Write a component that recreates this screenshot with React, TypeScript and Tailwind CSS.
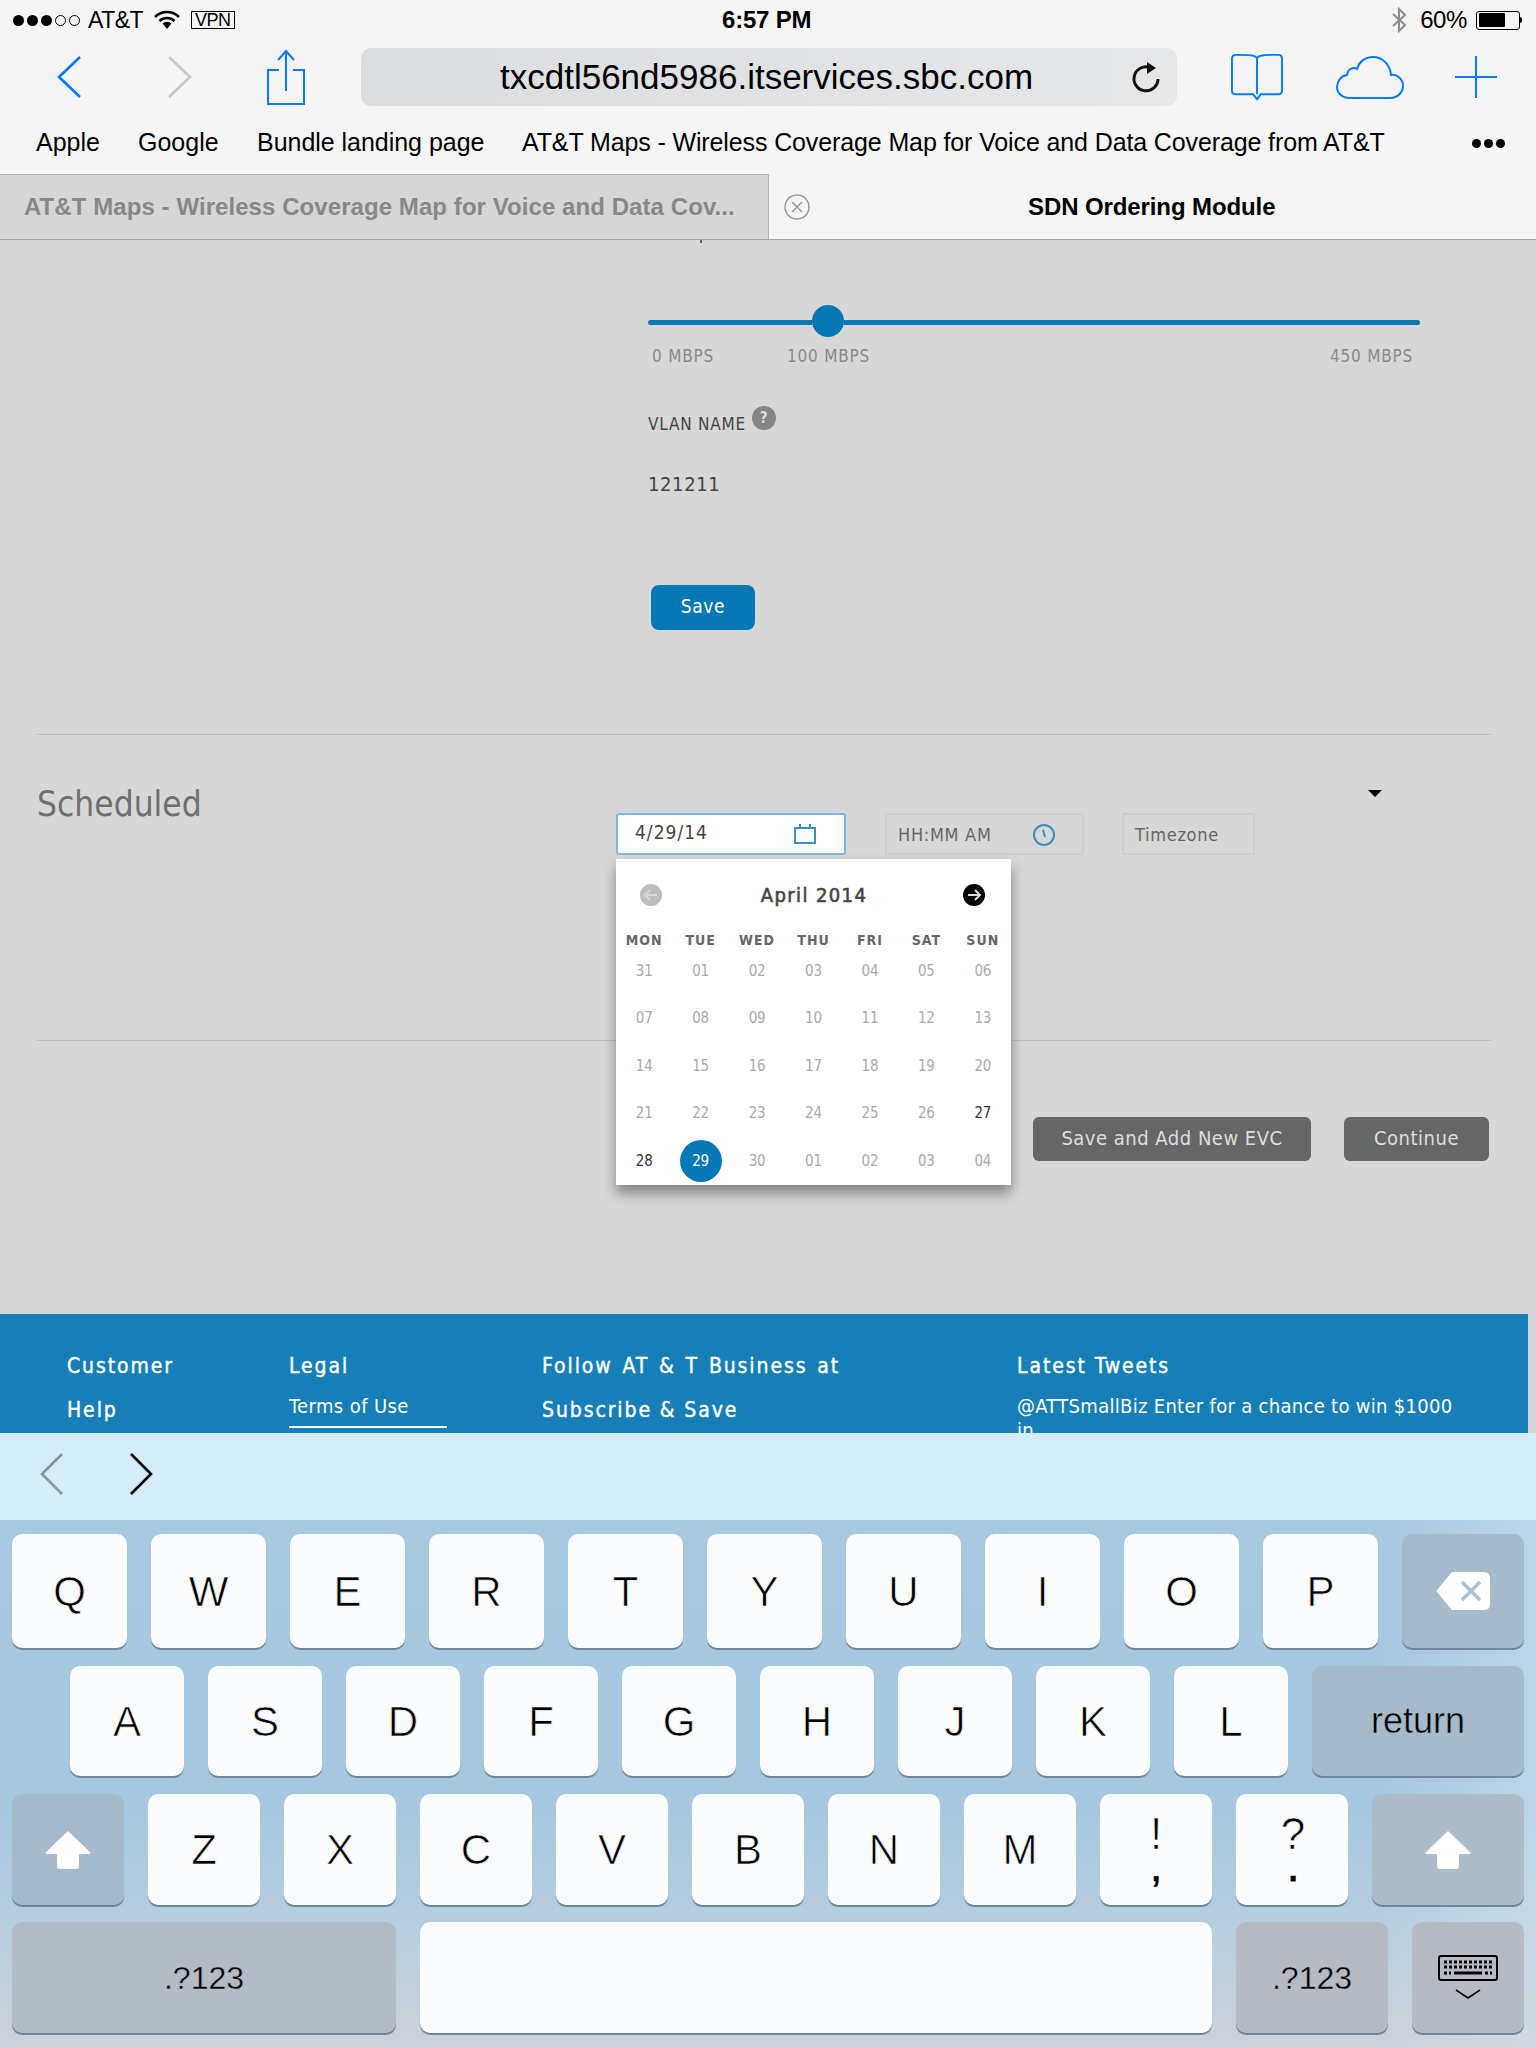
const sans = "font-['Liberation_Sans',Arial,sans-serif]";
const web = "font-['DejaVu_Sans_Condensed','DejaVu_Sans',sans-serif]";

const days = [
  "31", "01", "02", "03", "04", "05", "06",
  "07", "08", "09", "10", "11", "12", "13",
  "14", "15", "16", "17", "18", "19", "20",
  "21", "22", "23", "24", "25", "26", "27",
  "28", "29", "30", "01", "02", "03", "04",
];
const weekdays = ["MON", "TUE", "WED", "THU", "FRI", "SAT", "SUN"];

const rowOne = ["Q", "W", "E", "R", "T", "Y", "U", "I", "O", "P"];
const rowTwo = ["A", "S", "D", "F", "G", "H", "J", "K", "L"];
const rowThree = ["Z", "X", "C", "V", "B", "N", "M"];

const lightKey = `flex items-center justify-center rounded-[10px] bg-[#fbfcfe] text-[42px] leading-none text-black shadow-[0_2px_0_#71879a] [-webkit-text-stroke:0.7px_#fbfcfe] ${sans}`;
const darkKey = `flex items-center justify-center rounded-[10px] text-black shadow-[0_2px_0_#71879a] ${sans}`;

const StatusBar = () => (
  <div className={`flex h-10 items-center pl-[13px] pr-[14px] text-[23px] text-black ${sans}`}>
    <div className="flex w-[500px] items-center">
      <div className="flex gap-[3px]">
        {[0, 1, 2].map((i) => (
          <span key={i} className="h-[11px] w-[11px] rounded-full bg-black" />
        ))}
        {[0, 1].map((i) => (
          <span key={i} className="h-[11px] w-[11px] rounded-full border border-black" />
        ))}
      </div>
      <span className="ml-[8px] tracking-[-0.5px]">AT&amp;T</span>
      <svg className="ml-[11px]" width="26" height="20" viewBox="0 0 26 20">
        <path d="M1 7 A17 17 0 0 1 25 7" fill="none" stroke="#000" strokeWidth="2.6" />
        <path d="M5.5 11 A11 11 0 0 1 20.5 11" fill="none" stroke="#000" strokeWidth="2.6" />
        <path d="M13 19 L8.5 13.5 A7 7 0 0 1 17.5 13.5 Z" fill="#000" />
      </svg>
      <span className="ml-[11px] border border-black px-[3px] text-[18px] leading-[16px] tracking-[-0.5px]">VPN</span>
    </div>
    <div className="flex-1 pl-[209px] font-bold tracking-[-0.2px] [font-size:24px]">6:57 PM</div>
    <svg width="14" height="26" viewBox="0 0 14 26" fill="none" stroke="#8c8c8c" strokeWidth="2">
      <path d="M1 7 L13 18 L7 24 V2 L13 8 L1 19" />
    </svg>
    <span className="ml-[14px] text-[24px] tracking-[-0.4px]">60%</span>
    <div className="ml-[9px] flex h-[19px] w-[44px] items-center rounded-[3px] border border-black p-[1.5px]">
      <div className="h-full w-[26px] rounded-[1px] bg-black" />
    </div>
    <span className="h-[6px] w-[2px] rounded-r bg-black" />
  </div>
);

const Toolbar = () => (
  <div className="flex h-[76px] items-center pb-[2px]">
    <svg className="ml-[57px]" width="24" height="42" viewBox="0 0 24 42" fill="none" stroke="#007aff" strokeWidth="2.6">
      <path d="M23 1 L2 21 L23 41" />
    </svg>
    <svg className="ml-[87px]" width="24" height="42" viewBox="0 0 24 42" fill="none" stroke="#c8c8c8" strokeWidth="2.6">
      <path d="M1 1 L22 21 L1 41" />
    </svg>
    <svg className="ml-[75px]" width="38" height="56" viewBox="0 0 38 56" fill="none" stroke="#007aff" strokeWidth="2">
      <path d="M12 21 H1 V55 H37 V21 H26" />
      <path d="M19 42 V3 M11 11 L19 2 L27 11" />
    </svg>
    <div className={`ml-[56px] flex h-[58px] w-[816px] items-center rounded-[10px] bg-[linear-gradient(90deg,#dcdde0,#e6e7e9)] pl-[139px] text-[35px] text-black ${sans}`}>
      <span className="w-[538px] whitespace-nowrap">txcdtl56nd5986.itservices.sbc.com</span>
      <svg className="ml-[93px]" width="30" height="32" viewBox="0 0 30 32" fill="none" stroke="#111" strokeWidth="3">
        <path d="M19 6.5 A12 12 0 1 0 27 18" />
        <path d="M16 1 L25 7 L16 13 Z" fill="#111" stroke="none" />
      </svg>
    </div>
    <svg className="ml-[54px]" width="52" height="48" viewBox="0 0 54 48" fill="none" stroke="#007aff" strokeWidth="2">
      <path d="M27 4 C24 1 20 1 5 1 Q1 1 1 5 V38 Q1 42 5 42 H23 L27 47 L31 42 H49 Q53 42 53 38 V5 Q53 1 49 1 C34 1 30 1 27 4 V42" />
    </svg>
    <svg className="ml-[53px]" width="68" height="44" viewBox="0 0 68 44" fill="none" stroke="#007aff" strokeWidth="2">
      <path d="M14 43 H54 C62 43 67 37 67 31 C67 24 61 19 55 20 C54 9 46 2 37 2 C29 2 23 7 21 14 C18 12 12 13 11 20 C5 21 1 26 1 32 C1 38 6 43 14 43 Z" />
    </svg>
    <svg className="ml-[51px]" width="42" height="42" viewBox="0 0 42 42" stroke="#007aff" strokeWidth="2">
      <path d="M21 0 V42 M0 21 H42" />
    </svg>
  </div>
);

const Bookmarks = () => (
  <div className={`flex h-[58px] items-center pb-[4px] pl-[36px] text-[25px] text-black ${sans}`}>
    <span className="w-[102px]">Apple</span>
    <span className="w-[119px]">Google</span>
    <span className="w-[265px] tracking-[-0.03px]">Bundle landing page</span>
    <span className="w-[950px] whitespace-nowrap tracking-[-0.12px]">AT&amp;T Maps - Wireless Coverage Map for Voice and Data Coverage from AT&amp;T</span>
    <div className="flex gap-[3px]">
      {[0, 1, 2].map((i) => (
        <span key={i} className="h-[9px] w-[9px] rounded-full bg-black" />
      ))}
    </div>
  </div>
);

const Tabs = () => (
  <div className={`flex h-[66px] border-b border-[#a8a8a8] text-[24px] ${sans}`}>
    <div className="flex w-[769px] items-center whitespace-nowrap border-r border-t border-[#b3b3b3] bg-[#d6d6d6] pl-[24px] font-bold tracking-[0.07px] text-[#888]">
      AT&amp;T Maps - Wireless Coverage Map for Voice and Data Cov...
    </div>
    <div className="flex flex-1 items-center pl-[15px]">
      <svg width="26" height="26" viewBox="0 0 26 26" fill="none" stroke="#999" strokeWidth="1.5">
        <circle cx="13" cy="13" r="12" />
        <path d="M8 8 L18 18 M18 8 L8 18" />
      </svg>
      <span className="ml-[218px] font-bold tracking-[-0.1px] text-black">SDN Ordering Module</span>
    </div>
  </div>
);

const Calendar = () => (
  <div className={`absolute -left-[2px] top-[44px] z-10 h-[326px] w-[395px] bg-white shadow-[0_8px_12px_rgba(0,0,0,0.4)] ${web}`}>
    <div className="flex items-center pl-[24px] pt-[21px]">
      <svg width="22" height="22" viewBox="0 0 22 22">
        <circle cx="11" cy="11" r="11" fill="#bdbdbd" />
        <path d="M17 11 H5 M10 6 L5 11 L10 16" fill="none" stroke="#d8d8d8" strokeWidth="2" />
      </svg>
      <span className="w-[301px] pl-[3px] text-center text-[20px] tracking-[1.4px] text-[#444] [-webkit-text-stroke:0.6px_#444]">April 2014</span>
      <svg width="22" height="22" viewBox="0 0 22 22">
        <circle cx="11" cy="11" r="11" fill="#000" />
        <path d="M5 11 H17 M12 6 L17 11 L12 16" fill="none" stroke="#ddd" strokeWidth="2" />
      </svg>
    </div>
    <div className="mt-[20px] grid grid-cols-7 text-center text-[14px] font-bold leading-[20px] text-[#666]">
      {weekdays.map((d) => (
        <span key={d}>{d}</span>
      ))}
    </div>
    <div className="-mt-[3px] grid grid-cols-7 text-center text-[15px] tracking-[-0.2px]">
      {days.map((d, i) => {
        const dark = i === 27 || i === 28;
        const picked = i === 29;
        return (
          <div key={i} className="flex h-[47.5px] items-center justify-center">
            {picked ? (
              <span className="flex h-[42px] w-[42px] items-center justify-center rounded-full bg-[#0678b6] text-white">{d}</span>
            ) : (
              <span className={dark ? "text-[#333]" : "text-[#aaa]"}>{d}</span>
            )}
          </div>
        );
      })}
    </div>
  </div>
);

const Form = () => (
  <main className={`relative flex h-[1074px] flex-col bg-[#d7d7d7] ${web}`}>
    <span className="absolute left-[700px] top-0 h-[3px] w-[2px] bg-[#666]" />
    <section className="h-[494px] pl-[648px]">
      <div className="mt-[65px] flex h-[32px] w-[772px] items-center pt-[3px]">
        <div className="h-[5px] w-[164px] rounded-l bg-[#0678b6]" />
        <div className="-mt-[3px] h-[32px] w-[32px] rounded-full bg-[#0678b6]" />
        <div className="h-[5px] flex-1 rounded-r bg-[#0678b6]" />
      </div>
      <div className="mt-[8px] flex w-[765px] pl-[4px] text-[17px] leading-[22px] tracking-[0.8px] text-[#8a8a8a]">
        <span className="w-[135px]">0 MBPS</span>
        <span>100 MBPS</span>
        <span className="ml-auto">450 MBPS</span>
      </div>
      <div className="mt-[45px] flex items-start text-[17px] leading-[24px] tracking-[0.8px] text-[#444]">
        <span>VLAN NAME</span>
        <span className="ml-[6px] -mt-[6px] flex h-[24px] w-[24px] items-center justify-center rounded-full bg-[#858585] text-[15px] font-bold text-[#ddd]">?</span>
      </div>
      <div className="mt-[36px] text-[20px] leading-[24px] tracking-[0.6px] text-[#444]">121211</div>
      <button className="ml-[3px] mt-[89px] flex h-[45px] w-[104px] items-center justify-center rounded-[8px] bg-[#0678b6] pb-[2px] text-[19px] tracking-[0.6px] text-white">
        Save
      </button>
    </section>
    <div className="ml-[37px] mr-[45px] border-t border-[#bdbdbd]" />
    <section className="flex h-[305px] pl-[37px]">
      <h2 className="w-[579px] pt-[49px] text-[35px] leading-[40px] text-[#6f6f6f]">Scheduled</h2>
      <div className="flex flex-col">
        <div className="-mr-[127px] mt-[55px] flex h-[7px] justify-end">
          <span className="h-0 w-0 border-x-[7px] border-t-[7px] border-x-transparent border-t-black" />
        </div>
        <div className="mt-[16px] flex items-start text-[18px] tracking-[0.7px]">
          <div className="relative flex h-[42px] w-[230px] items-center rounded-[3px] border-2 border-[#7ab8e6] bg-white pb-[4px] pl-[17px] pr-[28px] text-[19px] tracking-[1px] text-[#444]">
            <span>4/29/14</span>
            <svg className="ml-auto mt-[4px]" width="22" height="20" viewBox="0 0 22 20" fill="none" stroke="#3a8fc0" strokeWidth="2">
              <path d="M1 4 H21 V19 H1 Z" />
              <path d="M6 0 V4 M16 0 V4" />
            </svg>
            <Calendar />
          </div>
          <div className="ml-[39px] flex h-[42px] w-[199px] items-center rounded-[3px] border-2 border-[#cdcdcd] pl-[11px] pr-[27px] pt-[1px] text-[#666]">
            <span>HH:MM AM</span>
            <svg className="ml-auto" width="22" height="22" viewBox="0 0 22 22" fill="none" stroke="#3a8fc0" strokeWidth="2">
              <circle cx="11" cy="11" r="10" />
              <path d="M10 6 L12 13" />
            </svg>
          </div>
          <div className="ml-[38px] flex h-[42px] w-[133px] items-center rounded-[3px] border-2 border-[#cdcdcd] pl-[11px] pt-[1px] text-[#666]">
            Timezone
          </div>
        </div>
      </div>
    </section>
    <div className="ml-[37px] mr-[45px] border-t border-[#bdbdbd]" />
    <section className="flex flex-1 items-start justify-end gap-[33px] pr-[47px] pt-[76px] text-[20px] tracking-[0.5px] text-[#ddd]">
      <button className="h-[44px] w-[278px] rounded-[6px] bg-[#666] pb-[3px]">Save and Add New EVC</button>
      <button className="h-[44px] w-[145px] rounded-[6px] bg-[#666] pb-[3px]">Continue</button>
    </section>
  </main>
);

const Footer = () => (
  <footer className={`h-[119px] w-[1528px] overflow-hidden bg-[#167fb8] pl-[67px] pt-[40px] text-[21px] leading-[24px] tracking-[1.9px] text-white ${web}`}>
    <div className="flex">
      <div className="w-[222px] [-webkit-text-stroke:0.4px_#fff]">
        <p>Customer</p>
        <p className="mt-[20px]">Help</p>
      </div>
      <div className="w-[253px]">
        <p className="[-webkit-text-stroke:0.4px_#fff]">Legal</p>
        <p className="mt-[16px] w-[158px] border-b-2 border-white pb-[8px] text-[20px] leading-[24px] tracking-[0.4px]">Terms of Use</p>
      </div>
      <div className="w-[475px] [-webkit-text-stroke:0.4px_#fff]">
        <p className="[word-spacing:2px]">Follow AT &amp; T Business at</p>
        <p className="mt-[20px]">Subscribe &amp; Save</p>
      </div>
      <div className="w-[450px]">
        <p className="[-webkit-text-stroke:0.4px_#fff]">Latest Tweets</p>
        <p className="mt-[16px] text-[20px] leading-[24px] tracking-[0.3px]">@ATTSmallBiz Enter for a chance to win $1000 in</p>
      </div>
    </div>
  </footer>
);

const Accessory = () => (
  <div className="flex h-[87px] items-center bg-[#d5ecf9] pb-[5px] pl-[40px]">
    <svg width="23" height="42" viewBox="0 0 23 42" fill="none" stroke="#8d9499" strokeWidth="2.6">
      <path d="M22 1 L2 21 L22 41" />
    </svg>
    <svg className="ml-[67px]" width="23" height="42" viewBox="0 0 23 42" fill="none" stroke="#000" strokeWidth="2.6">
      <path d="M1 1 L21 21 L1 41" />
    </svg>
  </div>
);

const ShiftIcon = () => (
  <svg width="46" height="40" viewBox="0 0 46 40" fill="#fff">
    <path d="M23 1 L45 22 Q46 24 44 24 H34 V36 Q34 39 31 39 H15 Q12 39 12 36 V24 H2 Q0 24 1 22 Z" />
  </svg>
);

const Keyboard = () => (
  <div className="flex h-[528px] flex-col bg-[linear-gradient(90deg,transparent_90%,rgba(215,228,238,0.45)_100%),linear-gradient(180deg,#a6c8e0_0%,#a5c8e0_55%,#b6cddd_75%,#cdd1d9_100%)] pt-[14px]">
    <div className="flex h-[114px] gap-[24px] pl-[12px]">
      {rowOne.map((k) => (
        <div key={k} className={`w-[115px] pt-[2px] ${lightKey}`}>{k}</div>
      ))}
      <div className={`w-[122px] bg-[#a7bac9] ${darkKey}`}>
        <svg width="54" height="38" viewBox="0 0 54 38">
          <path d="M16 0 H48 Q54 0 54 6 V32 Q54 38 48 38 H16 L1 20 Q0 19 1 18 Z" fill="#fff" />
          <path d="M26 10 L44 28 M44 10 L26 28" stroke="#a7c0d2" strokeWidth="3.4" />
        </svg>
      </div>
    </div>
    <div className="mt-[18px] flex h-[110px] gap-[24px] pl-[70px]">
      {rowTwo.map((k) => (
        <div key={k} className={`w-[114px] pt-[2px] ${lightKey}`}>{k}</div>
      ))}
      <div className={`w-[212px] bg-[#a7bac9] text-[36px] [-webkit-text-stroke:0.5px_#a7bac9] ${darkKey}`}>return</div>
    </div>
    <div className="mt-[18px] flex h-[111px] gap-[24px] pl-[12px]">
      <div className={`w-[112px] bg-[#a7bac9] ${darkKey}`}><ShiftIcon /></div>
      {rowThree.map((k) => (
        <div key={k} className={`w-[112px] ${lightKey}`}>{k}</div>
      ))}
      <div className={`w-[112px] flex-col pb-[14px] !text-[44px] ${lightKey}`}>
        <span className="h-[42px]">!</span>
        <span className="-mt-[10px] h-[30px] [-webkit-text-stroke:0.6px_#000]">,</span>
      </div>
      <div className={`w-[112px] flex-col pb-[14px] pl-[2px] !text-[44px] ${lightKey}`}>
        <span className="h-[42px]">?</span>
        <span className="-mt-[10px] h-[30px] [-webkit-text-stroke:0.8px_#000]">.</span>
      </div>
      <div className={`w-[152px] bg-[#aebcc8] ${darkKey}`}><ShiftIcon /></div>
    </div>
    <div className="mt-[17px] flex h-[111px] gap-[24px] pl-[12px]">
      <div className={`w-[384px] bg-[#b3bbc4] text-[32px] [-webkit-text-stroke:0.4px_#b3bbc4] ${darkKey}`}>.?123</div>
      <div className={`w-[792px] ${lightKey}`} />
      <div className={`w-[152px] bg-[#b6bbc3] text-[32px] [-webkit-text-stroke:0.4px_#b6bbc3] ${darkKey}`}>.?123</div>
      <div className={`w-[112px] flex-col bg-[#b6bbc3] ${darkKey}`}>
        <svg width="60" height="46" viewBox="0 0 60 46" fill="none" stroke="#000">
          <rect x="1" y="1" width="58" height="24" rx="2" strokeWidth="2" />
          <path d="M6 7 H54 M6 12 H54" strokeWidth="3" strokeDasharray="3 2" />
          <path d="M6 18 H13 M47 18 H54" strokeWidth="3" strokeDasharray="3 2" />
          <path d="M16 18 H44" strokeWidth="3" />
          <path d="M18 35 L30 43 L42 35" strokeWidth="1.6" />
        </svg>
      </div>
    </div>
  </div>
);

export default function App() {
  return (
    <div className="flex h-[2048px] w-[1536px] flex-col overflow-hidden bg-[#d7d7d7]">
      <div className="bg-[#f5f5f5]">
        <StatusBar />
        <Toolbar />
        <Bookmarks />
        <Tabs />
      </div>
      <Form />
      <Footer />
      <Accessory />
      <Keyboard />
    </div>
  );
}
